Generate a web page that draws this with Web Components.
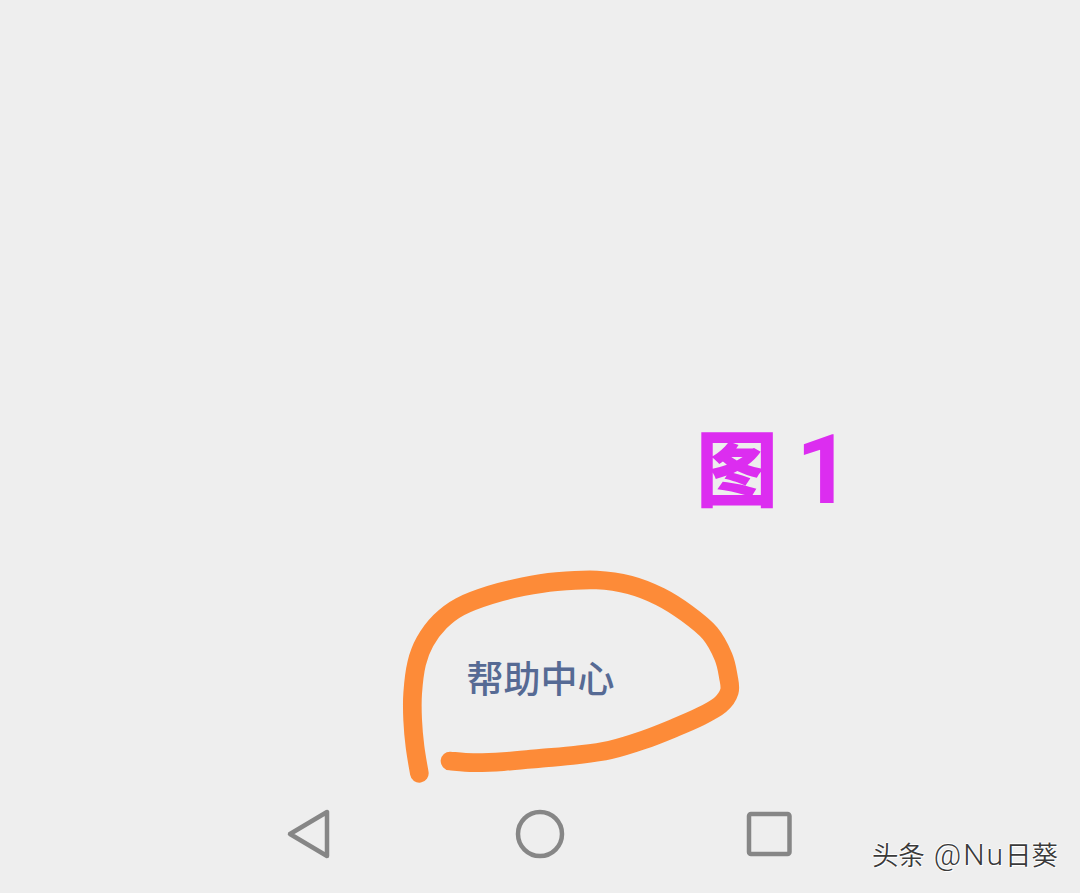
<!DOCTYPE html>
<html lang="zh"><head><meta charset="utf-8"><title>图 1</title>
<style>html,body{margin:0;padding:0;background:#eeeeee}</style></head>
<body>
<app-screen>
  <figure-label slot="canvas" style="left:696px;top:420px">图</figure-label>
  <help-callout slot="canvas" style="left:390px;top:560px">帮助中心</help-callout>
  <nav-button slot="nav" kind="back"></nav-button>
  <nav-button slot="nav" kind="home"></nav-button>
  <nav-button slot="nav" kind="recent"></nav-button>
  <water-mark slot="overlay">头条 <span style="font:300 30px/36px Roboto,sans-serif;letter-spacing:2px">@Nu</span>日葵</water-mark>
</app-screen>
<script>
const CJK='"Noto Sans CJK SC","Liberation Sans",sans-serif';
class AppScreen extends HTMLElement{constructor(){super();this.attachShadow({mode:'open'}).innerHTML=`
<style>
:host{display:flex;flex-direction:column;position:relative;width:1080px;height:893px;background:#eeeeee;overflow:hidden}
.canvas{flex:1;position:relative}
.nav{display:flex;justify-content:center;gap:170px;height:93px;box-sizing:border-box}
</style>
<div class="canvas"><slot name="canvas"></slot></div>
<div class="nav"><slot name="nav"></slot></div>
<slot name="overlay"></slot>`}}
class FigureLabel extends HTMLElement{constructor(){super();this.attachShadow({mode:'open'}).innerHTML=`
<style>
:host{position:absolute;display:flex;align-items:center;height:100px;color:#dc2df0;white-space:nowrap}
.zh{font:900 82px/100px ${CJK};width:100px;margin-bottom:10px}
.n{font:700 96px/100px Roboto,sans-serif}
</style>
<span class="zh"><slot></slot></span><span class="n">1</span>`}}
const PTS=[[88,640],[75,560],[68,480],[68,400],[80,310],[105,245],[150,185],[210,140],[300,105],[400,80],[500,65],[620,60],[720,75],[810,110],[890,160],[960,220],[1000,290],[1015,350],[1018,395],[990,435],[930,470],[850,505],[760,540],[660,570],[560,585],[450,595],[340,605],[250,608],[180,603]];
function smooth(p){let d=`M${p[0][0]} ${p[0][1]}`;for(let i=0;i<p.length-1;i++){const a=p[i-1]||p[i],b=p[i],c=p[i+1],e=p[i+2]||c;
d+=`C${(b[0]+(c[0]-a[0])/6).toFixed(1)} ${(b[1]+(c[1]-a[1])/6).toFixed(1)} ${(c[0]-(e[0]-b[0])/6).toFixed(1)} ${(c[1]-(e[1]-b[1])/6).toFixed(1)} ${c[0]} ${c[1]}`}return d}
class HelpCallout extends HTMLElement{constructor(){super();this.attachShadow({mode:'open'}).innerHTML=`
<style>
:host{position:absolute;display:block;width:360px;height:230px}
svg{position:absolute;inset:0;filter:blur(.5px)}
.t{position:absolute;left:76.500px;top:91px;font:500 37px/52px ${CJK};color:#566a94;white-space:nowrap}
</style>
<svg width="360" height="230" viewBox="0 0 1080 690" fill="none"><path d="${smooth(PTS)}" stroke="#fd8b38" stroke-width="56" stroke-linecap="round" stroke-linejoin="round"/></svg>
<div class="t"><slot></slot></div>`}}
const ICONS={
back:'<path d="M327 812V856L290 834Z"/>',
home:'<circle cx="540" cy="834" r="22"/>',
recent:'<rect x="749" y="814" width="40.500" height="40" rx="2"/>'};
const BOX={back:280,home:510,recent:740};
class NavButton extends HTMLElement{connectedCallback(){const k=this.getAttribute('kind');const x=BOX[k];
this.attachShadow({mode:'open'}).innerHTML=`
<style>:host{display:block;width:60px;height:60px;margin-top:4px}svg{display:block}</style>
<svg width="60" height="60" viewBox="${x} 804 60 60" fill="none" stroke="#868686" stroke-width="4.500" stroke-linejoin="round">${ICONS[k]}</svg>`}}
class WaterMark extends HTMLElement{constructor(){super();this.attachShadow({mode:'open'}).innerHTML=`
<style>:host{position:absolute;right:22px;bottom:20px;display:block;font:350 26.500px/36px ${CJK};word-spacing:3px;color:#3a3a3a;white-space:nowrap;text-shadow:1px 1px 0 #fff,-1px 0 0 #fff,0 -1px 0 #fff}</style>
<slot></slot>`}}
customElements.define('app-screen',AppScreen);
customElements.define('figure-label',FigureLabel);
customElements.define('help-callout',HelpCallout);
customElements.define('nav-button',NavButton);
customElements.define('water-mark',WaterMark);
</script>
</body></html>
